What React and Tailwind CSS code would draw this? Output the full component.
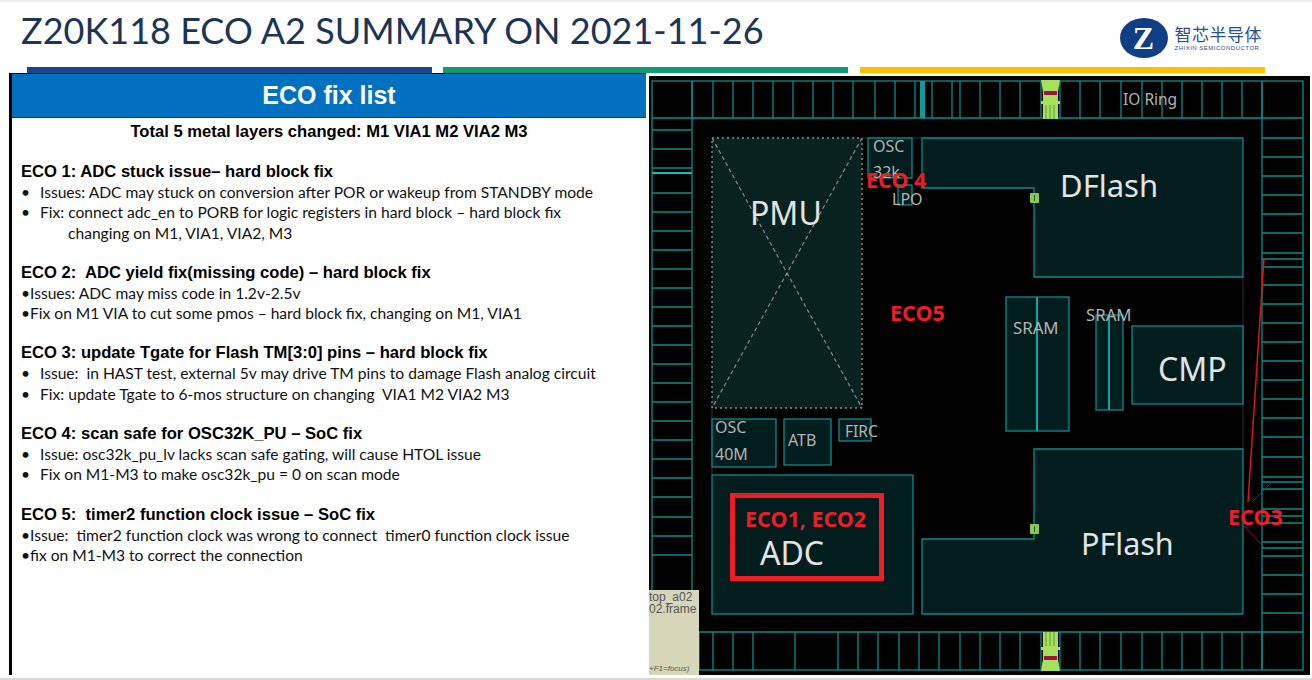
import React from 'react';

const sections = [
  {
    title: 'ECO 1: ADC stuck issue– hard block fix',
    lines: [
      { bullet: true, text: 'Issues: ADC may stuck on conversion after POR or wakeup from STANDBY mode', cls: 'pl-[19px]' },
      { bullet: true, text: 'Fix: connect adc_en to PORB for logic registers in hard block – hard block fix', cls: 'pl-[19px]' },
      { text: 'changing on M1, VIA1, VIA2, M3', cls: 'pl-[47px]' },
    ],
  },
  {
    title: 'ECO 2:  ADC yield fix(missing code) – hard block fix',
    lines: [
      { bullet: true, text: 'Issues: ADC may miss code in 1.2v-2.5v', cls: 'pl-[9px]' },
      { bullet: true, text: 'Fix on M1 VIA to cut some pmos – hard block fix, changing on M1, VIA1', cls: 'pl-[9px]' },
    ],
  },
  {
    title: 'ECO 3: update Tgate for Flash TM[3:0] pins – hard block fix',
    lines: [
      { bullet: true, text: 'Issue:  in HAST test, external 5v may drive TM pins to damage Flash analog circuit', cls: 'pl-[19px]' },
      { bullet: true, text: 'Fix: update Tgate to 6-mos structure on changing  VIA1 M2 VIA2 M3', cls: 'pl-[19px]' },
    ],
  },
  {
    title: 'ECO 4: scan safe for OSC32K_PU – SoC fix',
    lines: [
      { bullet: true, text: 'Issue: osc32k_pu_lv lacks scan safe gating, will cause HTOL issue', cls: 'pl-[19px]' },
      { bullet: true, text: 'Fix on M1-M3 to make osc32k_pu = 0 on scan mode', cls: 'pl-[19px]' },
    ],
  },
  {
    title: 'ECO 5:  timer2 function clock issue – SoC fix',
    lines: [
      { bullet: true, text: 'Issue:  timer2 function clock was wrong to connect  timer0 function clock issue', cls: 'pl-[9px]' },
      { bullet: true, text: 'fix on M1-M3 to correct the connection', cls: 'pl-[9px]' },
    ],
  },
];

const topVerticals = [692, 713, 733, 753, 773, 793, 813, 833, 853, 875, 895, 915, 932, 952, 960, 980, 1000, 1020, 1041, 1060, 1080, 1100, 1121, 1142, 1162, 1182, 1202, 1222, 1242, 1262];
const bottomVerticals = [699, 713, 733, 753, 795, 838, 858, 878, 899, 919, 939, 960, 980, 1000, 1020, 1041, 1060, 1080, 1100, 1121, 1142, 1162, 1182, 1202, 1222, 1242, 1262];
const leftHorizontals = [130, 149, 168, 193, 212, 231, 250, 269, 288, 307, 326, 345, 364, 383, 402, 421, 440, 459, 478, 497, 517, 536, 555];
const rightHorizontals = [138, 157, 176, 195, 214, 233, 253, 259, 267, 285, 304, 323, 342, 361, 380, 399, 418, 437, 457, 477, 482, 489, 509, 516, 523, 542, 548, 556, 575, 594, 613];

const Pad = ({ flip }) => (
  <g transform={flip ? 'translate(0 751) scale(1 -1)' : undefined}>
    <path d="M1041 80 L1060 80 L1058 92 L1058 119 L1043 119 L1043 92 Z" fill="#a6e05c" />
    <rect x="1041" y="101" width="19" height="3" fill="#a6e05c" />
    <rect x="1044" y="91" width="13" height="4" fill="#a01040" />
    <path d="M1046 105 V119 M1050 105 V119 M1054 105 V119" stroke="#5f9a3a" strokeWidth="1" />
  </g>
);

const Connector = ({ y }) => (
  <g>
    <rect x="1030" y={y} width="9" height="10" rx="1" fill="#8fc84f" />
    <path d={`M1034.500 ${y + 2} V${y + 8}`} stroke="#2c5a20" strokeWidth="1" />
  </g>
);

const ChipDrawing = () => (
  <svg viewBox="649 76 661 599" className="absolute inset-0 w-[661px] h-[599px] blur-[0.4px]">
    <rect x="649" y="76" width="661" height="599" fill="#000" />
    <g fill="none" stroke="#108a8a" strokeWidth="1.300">
      <rect x="652" y="81" width="651" height="589" />
      <path d="M652 118 H1303 M652 632 H1303 M692 81 V632 M1262 81 V670" />
      {topVerticals.map(x => <path key={x} d={`M${x} 81 V118`} />)}
      {bottomVerticals.map(x => <path key={x} d={`M${x} 632 V670`} />)}
      {leftHorizontals.map(y => <path key={y} d={`M652 ${y} H692`} />)}
      {rightHorizontals.map(y => <path key={y} d={`M1262 ${y} H1303`} />)}
    </g>
    <rect x="920" y="81" width="5" height="37" fill="#0d9a9a" />
    <rect x="652" y="172" width="40" height="2" fill="#10c0c0" />

    <path d="M1243 277 V449 M862 138 H922 M712 408 V475" stroke="#333" strokeWidth="1" />

    {/* PMU */}
    <rect x="712" y="138" width="150" height="270" fill="#082220" stroke="#8a8a8a" strokeWidth="1.500" strokeDasharray="2 3" />
    <path d="M712 138 L862 408 M862 138 L712 408" stroke="#8a8a8a" strokeWidth="1.200" strokeDasharray="4 3" fill="none" />

    <g fill="#021d1d" stroke="#108a8a" strokeWidth="1.300">
      <rect x="868" y="138" width="44" height="40" />
      <rect x="898" y="185" width="14" height="20" />
      <path d="M922 138 H1243 V277 H1034 V188 H922 Z" />
      <rect x="1006" y="297" width="63" height="134" />
      <rect x="1096" y="315" width="27" height="95" />
      <rect x="1132" y="326" width="111" height="78" />
      <path d="M1034 449 H1243 V614 H922 V539 H1034 Z" />
      <rect x="712" y="475" width="201" height="139" />
      <rect x="712" y="419" width="64" height="48" />
      <rect x="784" y="419" width="47" height="46" />
      <rect x="839" y="419" width="32" height="22" />
    </g>
    <path d="M1037 297 V431 M1109 315 V410" stroke="#0ea5a5" strokeWidth="2" />

    <Pad />
    <Pad flip />
    <Connector y={193} />
    <Connector y={524} />

    <rect x="732.500" y="495.500" width="149" height="83" fill="none" stroke="#ee1c25" strokeWidth="5" />
    <path d="M1264 258 L1248 502" stroke="#e0141e" strokeWidth="1.500" fill="none" />
    <path d="M1252 502 L1272 482 M1243 525 L1265 548" stroke="#a01018" strokeWidth="1" fill="none" />
  </svg>
);

const ChipMap = () => (
  <div className="relative w-[661px] h-[599px] mt-[3px] ml-[3px] overflow-hidden font-['Noto_Sans',sans-serif]">
    <ChipDrawing />
    <div className="absolute left-[474px] top-[24px] -translate-y-1/2 text-[15.500px] text-[#b4b4b4]">IO Ring</div>
    <div className="absolute left-[224px] top-[70px] -translate-y-1/2 text-[16px] text-[#b4b4b4]">OSC</div>
    <div className="absolute left-[224px] top-[96px] -translate-y-1/2 text-[16px] text-[#b4b4b4]">32k</div>
    <div className="absolute left-[243px] top-[123px] -translate-y-1/2 text-[16px] text-[#b4b4b4]">LPO</div>
    <div className="absolute left-[217px] top-[104px] -translate-y-1/2 text-[21.500px] font-bold text-[#ee1c25]">ECO 4</div>
    <div className="absolute left-[101px] top-[137px] -translate-y-1/2 text-[32px] text-[#e4e4e4]">PMU</div>
    <div className="absolute left-[411px] top-[109px] -translate-y-1/2 text-[31px] text-[#e4e4e4]">DFlash</div>
    <div className="absolute left-[241px] top-[237px] -translate-y-1/2 text-[21.500px] font-bold text-[#ee1c25]">ECO5</div>
    <div className="absolute left-[364px] top-[252px] -translate-y-1/2 text-[16.800px] text-[#b4b4b4]">SRAM</div>
    <div className="absolute left-[437px] top-[239px] -translate-y-1/2 text-[16.800px] text-[#b4b4b4]">SRAM</div>
    <div className="absolute left-[509px] top-[293px] -translate-y-1/2 text-[32px] text-[#e4e4e4]">CMP</div>
    <div className="absolute left-[66px] top-[351px] -translate-y-1/2 text-[16px] text-[#b4b4b4]">OSC</div>
    <div className="absolute left-[66px] top-[378px] -translate-y-1/2 text-[16px] text-[#b4b4b4]">40M</div>
    <div className="absolute left-[139px] top-[364px] -translate-y-1/2 text-[16px] text-[#b4b4b4]">ATB</div>
    <div className="absolute left-[196px] top-[356px] -translate-y-1/2 text-[15.500px] text-[#b4b4b4]">FIRC</div>
    <div className="absolute left-[96px] top-[443px] -translate-y-1/2 text-[21.500px] font-bold text-[#ee1c25]">ECO1, ECO2</div>
    <div className="absolute left-[111px] top-[477px] -translate-y-1/2 text-[32px] text-[#e4e4e4]">ADC</div>
    <div className="absolute left-[432px] top-[468px] -translate-y-1/2 text-[30.500px] text-[#e4e4e4]">PFlash</div>
    <div className="absolute left-[579px] top-[441px] -translate-y-1/2 text-[21.500px] font-bold text-[#ee1c25]">ECO3</div>
    <div className="absolute left-0 top-[514px] w-[50px] h-[85px] bg-[#d6d6b8] overflow-hidden text-[#555] font-['Liberation_Sans',sans-serif]">
      <div className="text-[12px] leading-[12px] mt-[1px] whitespace-nowrap">top_a02</div>
      <div className="text-[12px] leading-[12px] whitespace-nowrap">02.frame</div>
      <div className="absolute left-0 bottom-0 text-[8px] italic whitespace-nowrap">+F1=focus)</div>
    </div>
  </div>
);

const Logo = () => (
  <div className="flex items-center gap-[7px] mr-[50px] mt-[6px]">
    <div className="w-[48px] h-[40px] rounded-[50%] bg-[#0e3f85] flex items-center justify-center text-white font-['Liberation_Serif',serif] font-bold text-[32px] leading-none">Z</div>
    <div className="flex flex-col items-start">
      <div className="text-[17px] leading-[20px] tracking-[0.5px] text-[#2a4f86] font-['Noto_Sans_CJK_SC',sans-serif]">智芯半导体</div>
      <div className="text-[6px] leading-[8px] tracking-[0.5px] text-[#2a4f86] font-['Liberation_Sans',sans-serif] whitespace-nowrap">ZHIXIN SEMICONDUCTOR</div>
    </div>
  </div>
);

const FixList = () => (
  <div className="w-[637px] h-[602px] ml-[9px] border-l-[3px] border-t border-black bg-white">
    <div className="h-[44px] bg-[#0070c0] border-b border-[#1c3550] flex items-center justify-center text-white text-[25px] font-bold font-['Liberation_Sans',sans-serif]">
      ECO fix list
    </div>
    <div className="pt-1 pl-[9px]">
      <div className="text-center text-[16.600px] leading-[20px] font-bold font-['Liberation_Sans',sans-serif] text-black pr-[9px]">
        Total 5 metal layers changed: M1 VIA1 M2 VIA2 M3
      </div>
      {sections.map(s => (
        <div key={s.title} className="mt-[20px]">
          <div className="text-[16.600px] leading-[20px] font-bold font-['Liberation_Sans',sans-serif] text-black whitespace-pre">{s.title}</div>
          {s.lines.map(l => (
            <div key={l.text} className={`relative text-[15.600px] leading-[20.300px] text-[#111] font-['Lato',sans-serif] whitespace-pre ${l.cls}`}>
              {l.bullet && <span className="absolute left-0 top-0">•</span>}
              {l.text}
            </div>
          ))}
        </div>
      ))}
    </div>
  </div>
);

export default function App() {
  return (
    <div className="w-[1312px] h-[680px] overflow-hidden bg-white border-t-2 border-[#eeeeee]">
      <div className="h-[65px] flex items-center justify-between">
        <h1 className="pl-[21px] pb-[10px] text-[36px] font-normal text-[#1b3556] font-['Lato',sans-serif] whitespace-nowrap">Z20K118 ECO A2 SUMMARY ON 2021-11-26</h1>
        <Logo />
      </div>
      <div className="h-[6px] flex gap-[11px] pl-[27px]">
        <div className="w-[405px] bg-[#0f4c8f]"></div>
        <div className="w-[405px] bg-[#129b72]"></div>
        <div className="w-[405px] ml-[1px] bg-[#ffc000]"></div>
      </div>
      <div className="flex">
        <FixList />
        <ChipMap />
      </div>
      <div className="mt-[3px] h-[2px] bg-[#d8d8d8]"></div>
    </div>
  );
}
